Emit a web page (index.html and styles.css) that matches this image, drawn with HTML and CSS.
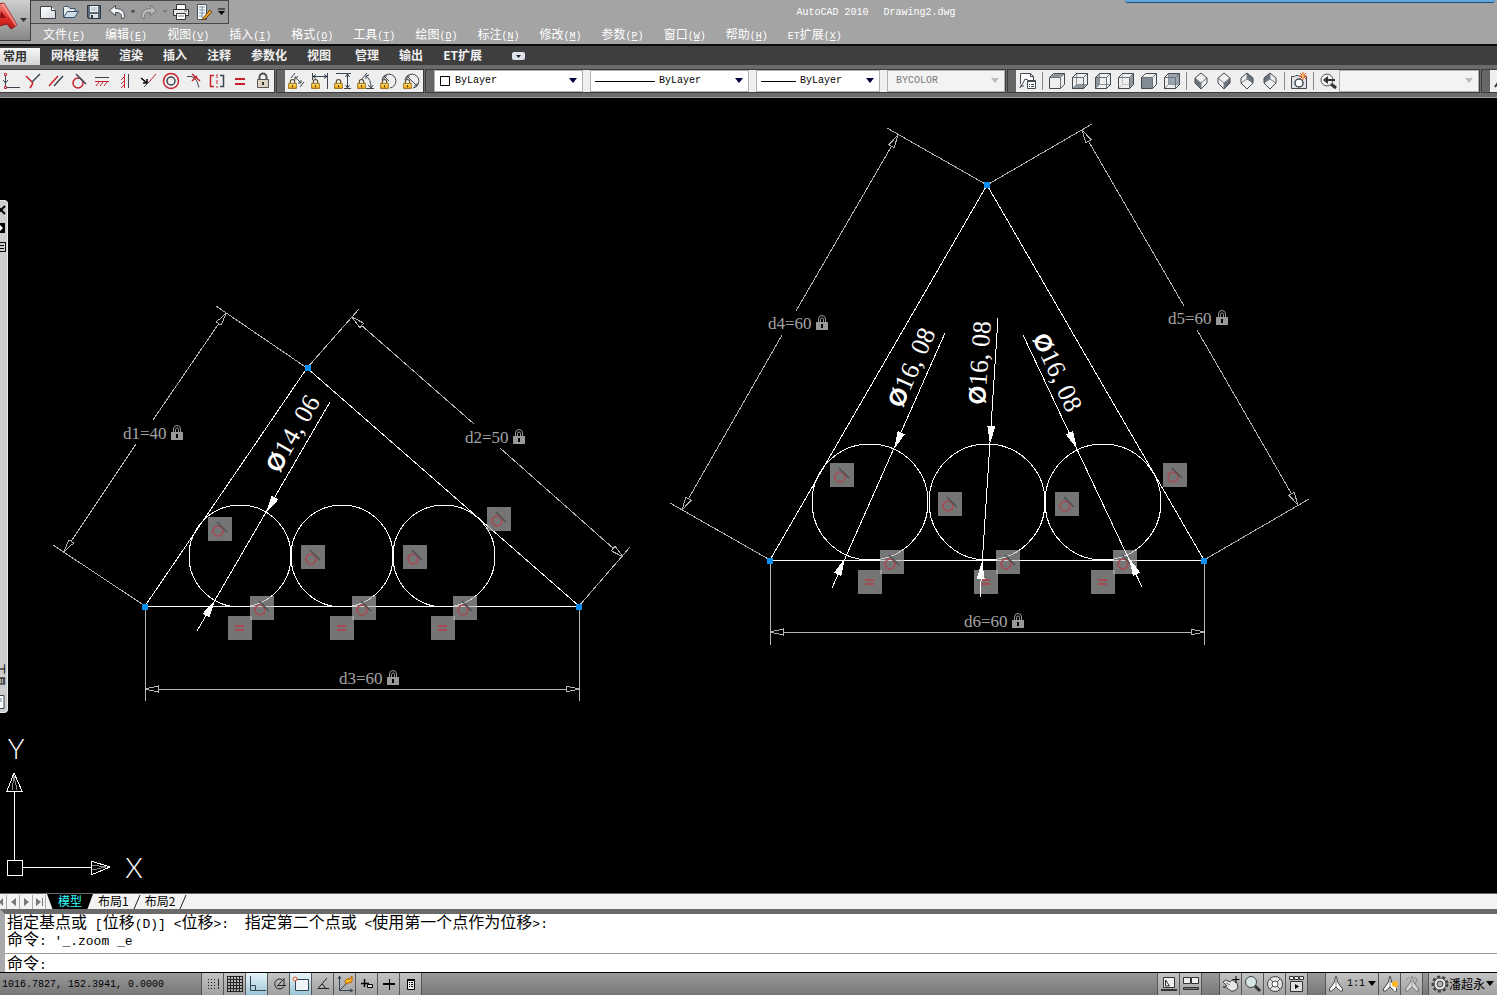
FILE: index.html
```html
<!DOCTYPE html>
<html lang="zh-CN">
<head>
	<meta charset="utf-8">
	<meta name="viewport" content="width=device-width, initial-scale=1">
	<title>AutoCAD 2010 Drawing2.dwg</title>
	<link rel="stylesheet" href="styles.css">
</head>

<body>
	<!-- shared shapes -->
	<svg class="defs" aria-hidden="true">
		<defs>
			<linearGradient id="paper" x1="0" y1="0" x2="1" y2="1"><stop offset="0" stop-color="#fff"/><stop offset="1" stop-color="#d5dade"/></linearGradient>
			<linearGradient id="red" x1="0" y1="0" x2="0" y2="1"><stop offset="0" stop-color="#f58a80"/><stop offset=".5" stop-color="#dd2b26"/><stop offset="1" stop-color="#a51313"/></linearGradient>
			<linearGradient id="gold" x1="0" y1="0" x2="0" y2="1"><stop offset="0" stop-color="#ffe27a"/><stop offset="1" stop-color="#f0a500"/></linearGradient>

			<symbol id="goldlock" viewBox="0 0 8 9"><path d="M2 4V2.500a2 2 0 0 1 4 0V4" fill="none" stroke="#5a4620"/><path d="M.5 4h7v4.500h-7z" fill="url(#gold)" stroke="#8a5a00" stroke-width=".7"/><path d="M4 5.500v2" stroke="#5a3a00"/></symbol>
			<symbol id="dimlock" viewBox="0 0 12 15"><path d="M2.500 7V4a3.500 3.500 0 0 1 7 0v3M4.500 7V4.500a1.500 1.500 0 0 1 3 0V7" fill="none" stroke="#999"/><path d="M0 7h12v8H0z" fill="#999"/><path d="M6 9v4" stroke="#000" stroke-width="2"/></symbol>
			<symbol id="tan" viewBox="0 0 24 24"><path d="M0 0h24v24H0z" fill="#b4b4b4" opacity=".65"/><circle cx="10" cy="14" r="5" fill="none" stroke="#a84850" stroke-width="1.500" shape-rendering="geometricPrecision"/><path d="M9 5l10 10" stroke="#4c5052" stroke-width="1.500" shape-rendering="geometricPrecision"/></symbol>
			<symbol id="eq" viewBox="0 0 24 24"><path d="M0 0h24v24H0z" fill="#b4b4b4" opacity=".65"/><path d="M7 10h9M7 14h9" stroke="#a84850" stroke-width="2"/></symbol>
			<symbol id="cube" viewBox="0 0 18 18"><path d="M1.500 5.500h11v11M12.500 5.500l4-4" fill="none" stroke="#6a727a"/><path d="M1.500 5.500l4-4h11v11l-4 4h-11z" fill="none" stroke="#434a52"/></symbol>
			<symbol id="cubeback" viewBox="0 0 18 18"><path d="M5.500 1.500v11M5.500 12.500h11M5.500 12.500l-4 4" fill="none" stroke="#8a929a"/><path d="M1.500 5.500l4-4h11v11l-4 4h-11z" fill="none" stroke="#434a52"/></symbol>
			<symbol id="diamond" viewBox="0 0 18 18"><path d="M3 6l6-5 6 5v5l-6 6-6-6z" fill="none" stroke="#434a52"/></symbol>
			<symbol id="down" viewBox="0 0 10 6"><path d="M1 0h8L5 5z" fill="currentColor"/></symbol>
			<symbol id="scale" viewBox="0 0 18 18"><path d="M7.500 7l1-5.500h1l1 5.500 5 7v2h-2l-4.500-4L4.500 16h-2v-2z" fill="#fff" stroke="#444"/><path d="M9 3v9" stroke="#888"/></symbol>

			<!-- arrow heads, tip at 0,0 -->
			<path id="open" d="M0 0L13-3V3Z" fill="#000" stroke="#b4b4b4"/>
			<path id="solid" d="M0 0L18-4V4Z" fill="#fff"/>
		</defs>
	</svg>

	<header class="titlebar">
		<button class="appmenu" type="button" aria-label="应用程序菜单">
			<svg width="30" height="40" viewBox="0 0 30 40"><path d="M-8 33L-2 4l6-1 13 22-6 4-4-5-8 2-2 8z" fill="url(#red)" stroke="#8b1414"/><path d="M0 18l1-7 5 7z" fill="#8e1010"/><path d="M4 3l13 22-2 1L1 4z" fill="#f8a098" opacity=".7"/><path d="M20 18h7l-3.500 4z" fill="#333"/></svg>
		</button>
		<div class="titlemain">
			<div class="titlerow">
				<div class="quick">
					<button type="button" aria-label="新建"><svg width="18" height="18"><path d="M1.500 3.500h11l4 4v8h-15z" fill="url(#paper)" stroke="#3a3f45"/><path d="M12.500 3.500v4h4" fill="#fff" stroke="#3a3f45"/></svg></button>
					<button type="button" aria-label="打开"><svg width="18" height="18"><path d="M1.500 14.500v-10l1-1h4l1.500 2h5v3" fill="#e6ebef" stroke="#35506a"/><path d="M1.500 14.500l4-6h11l-4 6z" fill="#cfdce6" stroke="#35506a"/></svg></button>
					<button type="button" aria-label="保存"><svg width="18" height="18"><path d="M2.500 2.500h13v13h-12l-1-1z" fill="#5b6a7a" stroke="#2d3844"/><path d="M5 3h8v6H5z" fill="#f4f6f8"/><path d="M6 5h6M6 7h6" stroke="#9aa"/><path d="M5 11h8v4H5z" fill="#dde2e6"/><path d="M6 12h2v3H6z" fill="#333"/></svg></button>
					<button type="button" aria-label="放弃"><svg width="18" height="18"><path d="M1.500 7.500l6-5v3c5 0 9 2 9 8l-1 2h-2c1-5-2-6-6-6v3z" fill="#f4f6f8" stroke="#444c55"/></svg></button>
					<button class="tiny" type="button" aria-label="放弃列表"><svg width="6" height="4"><use href="#down"/></svg></button>
					<button type="button" aria-label="重做"><svg width="18" height="18"><path d="M16.500 7.500l-6-5v3c-5 0-9 2-9 8l1 2h2c-1-5 2-6 6-6v3z" fill="#b8b8b8" stroke="#777"/></svg></button>
					<button class="tiny pale" type="button" aria-label="重做列表"><svg width="6" height="4"><use href="#down"/></svg></button>
					<button type="button" aria-label="打印"><svg width="18" height="18"><path d="M4.500 1.500h9v5h-9z" fill="#fff" stroke="#333"/><path d="M1.500 6.500h15v6h-15z" fill="#e8eaec" stroke="#333"/><path d="M4.500 10.500h9v6h-9z" fill="#fff" stroke="#333"/><path d="M6 13h6M12 8h3" stroke="#777"/></svg></button>
					<button type="button" aria-label="特性"><svg width="18" height="18"><path d="M2.500 1.500h9v15h-9z" fill="#fff" stroke="#47525c"/><path d="M4 4h6M4 7h6M4 10h6M4 13h4M7 3v12" stroke="#7890a5"/><path d="M8 15l7-8 2 2-7 7-3 1z" fill="#f0a020" stroke="#70440a"/></svg></button>
					<button class="more" type="button" aria-label="自定义"><svg width="9" height="8"><path d="M1 1h7" stroke="#000"/><path d="M1 3h7L4.500 7z"/></svg></button>
				</div>
				<h1 class="caption"><span>AutoCAD 2010</span><span>Drawing2.dwg</span></h1>
				<div class="bluetip"></div>
			</div>
			<nav class="menubar">
				<button type="button">文件<span>(<u>F</u>)</span></button>
				<button type="button">编辑<span>(<u>E</u>)</span></button>
				<button type="button">视图<span>(<u>V</u>)</span></button>
				<button type="button">插入<span>(<u>I</u>)</span></button>
				<button type="button">格式<span>(<u>O</u>)</span></button>
				<button type="button">工具<span>(<u>T</u>)</span></button>
				<button type="button">绘图<span>(<u>D</u>)</span></button>
				<button type="button">标注<span>(<u>N</u>)</span></button>
				<button type="button">修改<span>(<u>M</u>)</span></button>
				<button type="button">参数<span>(<u>P</u>)</span></button>
				<button type="button">窗口<span>(<u>W</u>)</span></button>
				<button type="button">帮助<span>(<u>H</u>)</span></button>
				<button type="button"><span>ET</span>扩展<span>(<u>X</u>)</span></button>
			</nav>
		</div>
	</header>

	<nav class="ribbon">
		<button class="on" type="button">常用</button>
		<button type="button">网格建模</button>
		<button type="button">渲染</button>
		<button type="button">插入</button>
		<button type="button">注释</button>
		<button type="button">参数化</button>
		<button class="wide" type="button">视图</button>
		<button type="button">管理</button>
		<button type="button">输出</button>
		<button type="button">ET扩展</button>
		<button class="fold" type="button" aria-label="最小化"><svg width="13" height="8"><rect width="13" height="8" rx="2" fill="#dfe3ea"/><path d="M4 3h5L6.500 6z" fill="#222"/></svg></button>
	</nav>

	<div class="toolbars">
		<!-- geometric constraints -->
		<div class="bar first">
			<button type="button" aria-label="重合"><svg width="18" height="18"><path d="M3.500 4v10M5 15.500h13" stroke="#3c4650"/><path d="M1 8l2.500 3L6 8" fill="none" stroke="#3c4650"/><path d="M2.500 1.500h2v2h-2zM2.500 14.500h2v2h-2z" fill="#fff" stroke="#c8202c"/></svg></button>
			<button type="button" aria-label="垂直"><svg width="18" height="18"><path d="M2 4l7 7M6 16l3-5" stroke="#c8202c" stroke-width="1.500"/><path d="M8 10l8-8" stroke="#3c4650" stroke-width="1.500"/></svg></button>
			<button type="button" aria-label="平行"><svg width="18" height="18"><path d="M2 14L11 4" stroke="#c8202c" stroke-width="1.500"/><path d="M7 14l9-10" stroke="#3c4650" stroke-width="1.500"/></svg></button>
			<button type="button" aria-label="相切"><svg width="18" height="18"><circle cx="8" cy="11" r="5" fill="none" stroke="#c8202c" stroke-width="1.500"/><path d="M6 2l10 10" stroke="#3c4650" stroke-width="1.500"/></svg></button>
			<button type="button" aria-label="水平"><svg width="18" height="18"><path d="M2 5.500h14" stroke="#3c4650"/><path d="M2 9.500h14M6 10l-3 4M10 10l-3 4M14 10l-3 4" stroke="#c8202c"/></svg></button>
			<button type="button" aria-label="竖直"><svg width="18" height="18"><path d="M12.500 2v14" stroke="#3c4650"/><path d="M8.500 2v14M8 5L5 8M8 9l-3 3M8 13l-3 3" stroke="#c8202c"/></svg></button>
			<button type="button" aria-label="共线"><svg width="18" height="18"><path d="M2 6l6 5M8 7v4H4" fill="none" stroke="#000" stroke-width="1.500"/><path d="M5 15l5-5" stroke="#3c4650"/><path d="M10 10l7-8" stroke="#c8202c"/></svg></button>
			<button type="button" aria-label="同心"><svg width="18" height="18"><circle cx="9" cy="9" r="7.500" fill="none" stroke="#c8202c" stroke-width="1.500"/><circle cx="9" cy="9" r="4" fill="none" stroke="#3c4650" stroke-width="1.500"/></svg></button>
			<button type="button" aria-label="平滑"><svg width="18" height="18"><path d="M2 4.500h4q4 0 6 5l2 6" fill="none" stroke="#3c4650"/><path d="M7 2l8 7M7 9l5-5" stroke="#c8202c" stroke-width="1.500"/></svg></button>
			<button type="button" aria-label="对称"><svg width="18" height="18"><path d="M6 3.500H2.500v11H6" fill="none" stroke="#c8202c" stroke-width="1.500"/><path d="M9 2v14" stroke="#c8202c" stroke-dasharray="4 2"/><path d="M12 3.500h3.500v11H12" fill="none" stroke="#3c4650" stroke-width="1.500"/></svg></button>
			<button type="button" aria-label="相等"><svg width="18" height="18"><path d="M4 7h10M4 12h10" stroke="#c8202c" stroke-width="2"/></svg></button>
			<button type="button" aria-label="固定"><svg width="18" height="18"><path d="M5.500 8V5a3.500 3.500 0 0 1 7 0v3" fill="none" stroke="#555" stroke-width="2"/><path d="M3.500 7.500h11v8h-11z" fill="#ddd3bf" stroke="#555"/><path d="M9 10v3" stroke="#333" stroke-width="2"/></svg></button>
		</div>

		<!-- dimensional constraints -->
		<div class="bar grip">
			<button type="button" aria-label="对齐"><svg width="18" height="18"><path d="M3 6l4-5M7 5l6 6M12 15l4-5M7 8V5h3M13 8v3h-3" fill="none" stroke="#3c4650"/><use href="#goldlock" x="0" y="7" width="9" height="10"/></svg></button>
			<button type="button" aria-label="水平"><svg width="18" height="18"><path d="M1.500 1v7M16.500 1v16M2 4.500h14M5 2.500l-3 2 3 2M13 2.500l3 2-3 2" fill="none" stroke="#3c4650"/><use href="#goldlock" x="0" y="7" width="9" height="10"/></svg></button>
			<button type="button" aria-label="竖直"><svg width="18" height="18"><path d="M2 1.500h15M10 16.500h7M13.500 2v14M11.500 5l2-3 2 3M11.500 13l2 3 2-3" fill="none" stroke="#3c4650"/><use href="#goldlock" x="0" y="7" width="9" height="10"/></svg></button>
			<button type="button" aria-label="角度"><svg width="18" height="18"><path d="M4 8l6-7M9 4q5 3 5 12M9 7V4l3-1M11 13l3 3 2-3M9 16.500h8" fill="none" stroke="#3c4650"/><use href="#goldlock" x="0" y="7" width="9" height="10"/></svg></button>
			<button type="button" aria-label="半径"><svg width="18" height="18"><path d="M2 8a7 7 0 1 1 8 8M9 9L4 4M4 7V4h3" fill="none" stroke="#3c4650"/><use href="#goldlock" x="0" y="7" width="9" height="10"/></svg></button>
			<button type="button" aria-label="直径"><svg width="18" height="18"><path d="M2 8a7 7 0 1 1 8 8M14 14L4 4M4 7V4h3M14 11v3h-3" fill="none" stroke="#3c4650"/><use href="#goldlock" x="0" y="7" width="9" height="10"/></svg></button>
		</div>

		<!-- properties -->
		<div class="bar grip props">
			<div class="combo color">
				<svg width="12" height="12"><path d="M1.500 1.500h9v9h-9z" fill="#fff" stroke="#000"/></svg>
				<select aria-label="颜色"><option>ByLayer</option></select>
				<svg class="arrow" width="10" height="6"><use href="#down"/></svg>
			</div>
			<div class="combo ltype">
				<svg width="60" height="3"><path d="M0 1.500h60" stroke="#000"/></svg>
				<select aria-label="线型"><option>ByLayer</option></select>
				<svg class="arrow" width="10" height="6"><use href="#down"/></svg>
			</div>
			<div class="combo lweight">
				<svg width="35" height="3"><path d="M0 1.500h35" stroke="#000"/></svg>
				<select aria-label="线宽"><option>ByLayer</option></select>
				<svg class="arrow" width="10" height="6"><use href="#down"/></svg>
			</div>
			<div class="combo plot off">
				<select aria-label="打印样式" disabled><option>BYCOLOR</option></select>
				<svg class="arrow" width="10" height="6"><use href="#down"/></svg>
			</div>
		</div>

		<!-- views -->
		<div class="bar grip">
			<button type="button" aria-label="命名视图"><svg width="18" height="18"><path d="M1.500 12V1.500h10l3 3V8" fill="#fff" stroke="#434a52"/><path d="M11.500 1.500v3h3M1 16l3-5 2-4 3 1M1 14h4" fill="none" stroke="#434a52"/><path d="M8.500 8.500h8v8h-8z" fill="#fff" stroke="#434a52"/><path d="M9 9.500h7M10 12.500h1M12 12.500h3M10 14.500h1M12 14.500h3" stroke="#434a52"/></svg></button>
			<i class="sep"></i>
			<button type="button" aria-label="俯视"><svg width="18" height="18"><path d="M2 5l4-3h10l-4 3z" fill="#8d959d"/><use href="#cube"/></svg></button>
			<button type="button" aria-label="仰视"><svg width="18" height="18"><path d="M2 16l4-4h10l-4 4z" fill="#8d959d"/><use href="#cubeback"/><use href="#cube"/></svg></button>
			<button type="button" aria-label="左视"><svg width="18" height="18"><path d="M2 6l4-4v10l-4 4z" fill="#8d959d"/><use href="#cubeback"/><use href="#cube"/></svg></button>
			<button type="button" aria-label="右视"><svg width="18" height="18"><path d="M13 6l3-4v10l-3 4z" fill="#8d959d"/><use href="#cubeback" opacity=".5"/><use href="#cube"/></svg></button>
			<button type="button" aria-label="前视"><svg width="18" height="18"><path d="M2 6h10v10H2z" fill="#818b95"/><use href="#cube"/></svg></button>
			<button type="button" aria-label="后视"><svg width="18" height="18"><path d="M6 2h10v10H6z" fill="#99a4b0"/><use href="#cubeback"/><use href="#cube"/></svg></button>
			<i class="sep"></i>
			<button type="button" aria-label="西南等轴测"><svg width="18" height="18"><path d="M3 6l6 5v6l-6-6z" fill="#69737d"/><path d="M3 6l6 5 6-5M9 11v6" fill="none" stroke="#7a828a"/><use href="#diamond"/></svg></button>
			<button type="button" aria-label="东南等轴测"><svg width="18" height="18"><path d="M15 6l-6 5v6l6-6z" fill="#69737d"/><path d="M3 6l6 5 6-5M9 11v6" fill="none" stroke="#7a828a"/><use href="#diamond"/></svg></button>
			<button type="button" aria-label="东北等轴测"><svg width="18" height="18"><path d="M9 1l6 5v5L9 7z" fill="#69737d"/><path d="M3 11l6-4 6 4M9 1v6" fill="none" stroke="#7a828a"/><use href="#diamond"/></svg></button>
			<button type="button" aria-label="西北等轴测"><svg width="18" height="18"><path d="M9 1L3 6v5l6-4z" fill="#69737d"/><path d="M3 11l6-4 6 4M9 1v6" fill="none" stroke="#7a828a"/><use href="#diamond"/></svg></button>
			<i class="sep"></i>
			<button type="button" aria-label="创建相机"><svg width="18" height="18"><path d="M1.500 4.500h3l1-1h3l1 1h7v12h-15z" fill="#dfe3e6" stroke="#434a52"/><circle cx="9" cy="11" r="4" fill="#fff" stroke="#434a52" stroke-width="1.500"/><path d="M13 0v8M9 4h8M10 1l6 6M16 1l-6 6" stroke="#e05c10"/><circle cx="13" cy="4" r="1" fill="#ffe060"/></svg></button>
			<i class="sep"></i>
			<button type="button" aria-label="上一个视图"><svg width="18" height="18"><path d="M12 12l5 4" stroke="#333" stroke-width="3"/><circle cx="8" cy="8" r="6" fill="#e8edf0" stroke="#555"/><path d="M4 8l5-4v3h7v2H9v3z" fill="#333"/></svg></button>
			<div class="combo views off">
				<select aria-label="视图列表" disabled><option></option></select>
				<svg class="arrow" width="10" height="6"><use href="#down"/></svg>
			</div>
		</div>

		<div class="bar grip last">
			<button type="button" aria-label="直线"><svg width="18" height="18"><path d="M2 15L10 3" stroke="#333" stroke-width="2"/></svg></button>
		</div>
	</div>

	<main class="canvas">
		<svg class="drawing" width="100%" height="100%">
			<g transform="translate(0,-98)" shape-rendering="crispEdges">
				<!-- left triangle: outline and dimensions -->
				<g fill="none" stroke="#b4b4b4">
					<path d="M307 368L216 306M145 606L53 545M307 368L359 309M579 606L630 547M145 606V701M579 606V701"/>
					<path d="M226 313L153 420M136 444L64 552M352 317L474 424M500 448L623 557M145 689H579"/>
				</g>
				<use href="#open" transform="translate(226,313) rotate(124)"/>
				<use href="#open" transform="translate(64,552) rotate(-56)"/>
				<use href="#open" transform="translate(352,317) rotate(41)"/>
				<use href="#open" transform="translate(623,557) rotate(-139)"/>
				<use href="#open" transform="translate(145,689)"/>
				<use href="#open" transform="translate(579,689) rotate(180)"/>
				<g fill="none" stroke="#fff">
					<path d="M145 606L307 368L579 606Z"/>
					<circle cx="240" cy="556" r="51"/><circle cx="342" cy="556" r="51"/><circle cx="444" cy="556" r="51"/>
					<path d="M330 402L197 631"/>
				</g>
				<use href="#solid" transform="translate(266,513) rotate(-60)"/>
				<use href="#solid" transform="translate(215,600) rotate(120)"/>
				<use href="#tan" x="208" y="517" width="24" height="24"/>
				<use href="#tan" x="301" y="545" width="24" height="24"/>
				<use href="#tan" x="403" y="545" width="24" height="24"/>
				<use href="#tan" x="487" y="507" width="24" height="24"/>
				<use href="#tan" x="250" y="596" width="24" height="24"/>
				<use href="#tan" x="352" y="596" width="24" height="24"/>
				<use href="#tan" x="453" y="596" width="24" height="24"/>
				<use href="#eq" x="228" y="616" width="24" height="24"/>
				<use href="#eq" x="330" y="616" width="24" height="24"/>
				<use href="#eq" x="431" y="616" width="24" height="24"/>

				<!-- right triangle -->
				<g fill="none" stroke="#b4b4b4">
					<path d="M987 185L887 128M770 560L670 503M987 185L1092 124M1204 560L1309 499M770 560V645M1204 560V645"/>
					<path d="M898 135L796 311M782 335L682 510M1082 130L1184 306M1197 330L1298 505M770 632H1204"/>
				</g>
				<use href="#open" transform="translate(898,135) rotate(120)"/>
				<use href="#open" transform="translate(682,510) rotate(-60)"/>
				<use href="#open" transform="translate(1082,130) rotate(60)"/>
				<use href="#open" transform="translate(1298,505) rotate(-120)"/>
				<use href="#open" transform="translate(770,632)"/>
				<use href="#open" transform="translate(1204,632) rotate(180)"/>
				<g fill="none" stroke="#fff">
					<path d="M770 560L987 185L1204 560Z"/>
					<circle cx="870" cy="502" r="58"/><circle cx="987" cy="502" r="58"/><circle cx="1103" cy="502" r="58"/>
				</g>
				<use href="#tan" x="830" y="463" width="24" height="24"/>
				<use href="#tan" x="938" y="492" width="24" height="24"/>
				<use href="#tan" x="1055" y="492" width="24" height="24"/>
				<use href="#tan" x="1163" y="463" width="24" height="24"/>
				<use href="#tan" x="880" y="550" width="24" height="24"/>
				<use href="#tan" x="996" y="550" width="24" height="24"/>
				<use href="#tan" x="1113" y="550" width="24" height="24"/>
				<use href="#eq" x="858" y="570" width="24" height="24"/>
				<use href="#eq" x="974" y="570" width="24" height="24"/>
				<use href="#eq" x="1091" y="570" width="24" height="24"/>
				<path d="M945 333L832 588M998 318L980 597M1023 335L1142 587" fill="none" stroke="#fff"/>
				<use href="#solid" transform="translate(894,449) rotate(-66)"/>
				<use href="#solid" transform="translate(845,558) rotate(114)"/>
				<use href="#solid" transform="translate(990,444) rotate(-86)"/>
				<use href="#solid" transform="translate(982,561) rotate(94)"/>
				<use href="#solid" transform="translate(1077,449) rotate(-115)"/>
				<use href="#solid" transform="translate(1129,558) rotate(65)"/>

				<!-- grips -->
				<path d="M305 365h6v6h-6zM142 604h6v6h-6zM576 604h6v6h-6zM984 182h6v6h-6zM767 558h6v6h-6zM1201 558h6v6h-6z" fill="#0a90f0"/>

				<!-- ucs icon -->
				<path d="M7 860H22V875H7ZM14 860V791M22 867H91M14 773L7 791H22ZM110 867L91 861V875Z" fill="none" stroke="#fff"/>
				<path d="M12 790L14 776L17 790M92 865L106 867L92 870" fill="none" stroke="#888"/>
			</g>
			<g transform="translate(0,-98)">
				<g class="param">
					<text x="123" y="439">d1=40</text><use href="#dimlock" x="171" y="425" width="12" height="15"/>
					<text x="465" y="443">d2=50</text><use href="#dimlock" x="513" y="429" width="12" height="15"/>
					<text x="339" y="684">d3=60</text><use href="#dimlock" x="387" y="670" width="12" height="15"/>
					<text x="768" y="329">d4=60</text><use href="#dimlock" x="816" y="315" width="12" height="15"/>
					<text x="1168" y="324">d5=60</text><use href="#dimlock" x="1216" y="310" width="12" height="15"/>
					<text x="964" y="627">d6=60</text><use href="#dimlock" x="1012" y="613" width="12" height="15"/>
				</g>
				<g class="dia">
					<text transform="translate(279,474) rotate(-60)"><tspan class="phi">Ø</tspan>14, 06</text>
					<text transform="translate(902,409) rotate(-66)"><tspan class="phi">Ø</tspan>16, 08</text>
					<text transform="translate(985,405) rotate(-86)"><tspan class="phi">Ø</tspan>16, 08</text>
					<text transform="translate(1032,338) rotate(65)"><tspan class="phi">Ø</tspan>16, 08</text>
				</g>
				<g class="axis">
					<text x="16" y="759">Y</text>
					<text x="134" y="878">X</text>
				</g>
			</g>
		</svg>

		<aside class="palette">
			<button type="button" aria-label="关闭"><svg width="6" height="10"><path d="M-3 1l8 8M5 1l-8 8" stroke="#000" stroke-width="2"/></svg></button>
			<button type="button" aria-label="自动隐藏"><svg width="6" height="10"><path d="M0 0h5v10H0z"/><path d="M0 2l3 3-3 3z" fill="#fff"/></svg></button>
			<button type="button" aria-label="特性"><svg width="6" height="11"><path d="M0 1.500h5.500v9H0M0 4.500h4M0 7.500h4" fill="none" stroke="#000"/></svg></button>
			<span class="name">工具</span>
			<svg width="6" height="14"><path d="M-1 .5h5v13h-5" fill="#fff" stroke="#345"/><path d="M0 3h2v4H0z" fill="#abc"/></svg>
		</aside>
	</main>

	<div class="layouts">
		<button class="nav" type="button" aria-label="第一个"><svg width="6" height="12"><path d="M3 2v8L-1 6z" fill="#777"/></svg></button>
		<button class="nav" type="button" aria-label="上一个"><svg width="11" height="12"><path d="M8 2v8L3 6z" fill="#777"/></svg></button>
		<button class="nav" type="button" aria-label="下一个"><svg width="11" height="12"><path d="M3 2v8l5-4z" fill="#777"/></svg></button>
		<button class="nav" type="button" aria-label="最后一个"><svg width="11" height="12"><path d="M2 2v8l5-4z" fill="#777"/><path d="M8.500 2v8" stroke="#777"/></svg></button>
		<button class="tab on" type="button">模型</button>
		<button class="tab" type="button">布局1</button>
		<svg width="8" height="14"><path d="M1 14L7 0" stroke="#222"/></svg>
		<button class="tab" type="button">布局2</button>
		<svg width="8" height="14"><path d="M1 14L7 0" stroke="#222"/></svg>
	</div>

	<section class="command">
		<div class="history">
			<p>指定基点或<span> [</span>位移<span>(D)] &lt;</span>位移<span>&gt;:  </span>指定第二个点或<span> &lt;</span>使用第一个点作为位移<span>&gt;:</span></p>
			<p>命令<span>: '_.zoom _e</span></p>
		</div>
		<div class="prompt">
			<label for="cmd">命令<span>:</span></label>
			<input id="cmd" type="text">
		</div>
	</section>

	<footer class="status">
		<output class="coords">1016.7827, 152.3941, 0.0000</output>
		<div class="group">
			<button type="button" aria-label="捕捉"><svg width="18" height="18"><path d="M4 4.500h9M4 7.500h9M4 10.500h9M4 13.500h9" stroke="#222" stroke-dasharray="1 2"/><path d="M14.500 4v10" stroke="#222" stroke-dasharray="7 1"/></svg></button>
			<button type="button" aria-label="栅格"><svg width="18" height="18"><path d="M1 1.500h16M1 4.500h16M1 7.500h16M1 10.500h16M1 13.500h16M1 16.500h16M1.500 1v16M4.500 1v16M7.500 1v16M10.500 1v16M13.500 1v16M16.500 1v16" stroke="#222"/></svg></button>
			<button class="lit" type="button" aria-label="正交"><svg width="18" height="18"><path d="M2.500 1v14.500H18M2.500 10.500h5v5" fill="none" stroke="#345"/></svg></button>
			<button type="button" aria-label="极轴"><svg width="18" height="18"><path d="M12 4.500a5 5 0 1 0 2 7M8 10.500l6-7v7" fill="none" stroke="#222"/><path d="M7 10.500h9" stroke="#222"/></svg></button>
			<button class="lit" type="button" aria-label="对象捕捉"><svg width="18" height="18"><path d="M3.500 4.500h13v11h-13z" fill="#eef4f7" stroke="#345"/><circle cx="3" cy="4" r="2" fill="#fff" stroke="#e05020"/></svg></button>
			<button type="button" aria-label="对象追踪"><svg width="18" height="18"><path d="M13 3L4 13.500h11M8 9q3 2 3 4" fill="none" stroke="#222"/></svg></button>
			<button type="button" aria-label="动态 UCS"><svg width="18" height="18"><path d="M3.500 2v13.500H16M4 15l8-8M2 4l1.500-3L5 4M14 14l3 1.500-3 1.500" fill="none" stroke="#345"/><path d="M9 6l3-3 1 2 3-4v6l-4 1-2 1z" fill="#ffb820" stroke="#b86000"/></svg></button>
			<button type="button" aria-label="动态输入"><svg width="18" height="18"><path d="M3 8.500h8M6.500 4v8" stroke="#000" stroke-width="1.500"/><path d="M9.500 9.500h5v3h-5z" fill="#ddd" stroke="#000"/></svg></button>
			<button type="button" aria-label="线宽"><svg width="18" height="18"><path d="M3 9h12" stroke="#000" stroke-width="2"/><path d="M9.500 4v11" stroke="#000"/></svg></button>
			<button type="button" aria-label="快捷特性"><svg width="18" height="18"><path d="M5.500 4.500h7v10h-7z" fill="#eee" stroke="#000"/><path d="M7 7.500h1M9 7.500h2M7 9.500h1M9 9.500h2M7 11.500h1M9 11.500h2" stroke="#000"/><path d="M5 5h8" stroke="#000" stroke-width="2"/></svg></button>
		</div>
		<div class="group right">
			<button type="button" aria-label="模型"><svg width="18" height="18"><path d="M3.500 2.500h11v10h-11z" fill="#eee" stroke="#333"/><path d="M5.500 5v6h4z" fill="none" stroke="#333"/><path d="M1 15h16" stroke="#333" stroke-width="2"/></svg></button>
			<button type="button" aria-label="快速查看图形"><svg width="18" height="18"><path d="M1.500 2.500h7v6h-7zM9.500 2.500h7v6h-7z" fill="#eee" stroke="#333"/><path d="M1.500 12.500h15v2h-15z" fill="#777" stroke="#333"/></svg></button>
		</div>
		<div class="group gap">
			<button type="button" aria-label="平移"><svg width="18" height="18"><path d="M1 7l3-2 4 2 2-2 5 3 1 5-4 3H9l-4-3-4-1 4-1z" fill="#e8e8e8" stroke="#444"/><path d="M14 1v7M10.500 4.500h7" stroke="#000"/><path d="M4 8l4 2" stroke="#777"/></svg></button>
			<button type="button" aria-label="缩放"><svg width="18" height="18"><path d="M10 10l6 6" stroke="#333" stroke-width="3"/><circle cx="7" cy="7" r="5.500" fill="#d6e4e4" stroke="#444"/></svg></button>
			<button type="button" aria-label="控制盘"><svg width="18" height="18"><circle cx="9" cy="9" r="7.500" fill="#e4e4e4" stroke="#444"/><circle cx="9" cy="9" r="3" fill="#fff" stroke="#555"/><path d="M4 4l3 3M14 4l-3 3M4 14l3-3M14 14l-3-3" stroke="#555"/></svg></button>
			<button type="button" aria-label="动画"><svg width="18" height="18"><path d="M1.500 1.500h4v3h-4zM6.500 1.500h4v3h-4zM11.500 1.500h4v3h-4z" fill="#eee" stroke="#333"/><path d="M2.500 6.500h12v10h-12z" fill="#ddd" stroke="#333"/><path d="M7 9v5l4-2.500z"/></svg></button>
		</div>
		<div class="group gap">
			<button class="anno" type="button"><svg width="18" height="18"><use href="#scale"/></svg><span>1:1</span><svg width="10" height="6"><use href="#down"/></svg></button>
			<button type="button" aria-label="注释可见性"><svg width="18" height="18"><use href="#scale"/><circle cx="14" cy="9" r="3" fill="#ffb820"/><path d="M14 12v4" stroke="#fff" stroke-width="2"/></svg></button>
			<button class="dim" type="button" aria-label="自动缩放"><svg width="18" height="18"><use href="#scale"/><path d="M3 5l3-3M12 2l2 3-2 4" fill="none" stroke="#444"/></svg></button>
		</div>
		<div class="group user">
			<button type="button"><svg width="18" height="18"><circle cx="9" cy="9" r="7" fill="none" stroke="#444" stroke-width="3" stroke-dasharray="3 2"/><circle cx="9" cy="9" r="6" fill="#e6e6e6" stroke="#444"/><circle cx="9" cy="9" r="3" fill="#b0b0b0" stroke="#444"/></svg><span class="cn">潘超永</span><svg width="10" height="6"><use href="#down"/></svg></button>
		</div>
	</footer>
</body>
</html>
```
FILE: styles.css
```css
* {
	box-sizing:border-box;
}

body {
	margin:0;
	height:100vh;
	display:flex;
	flex-direction:column;
	overflow:hidden;
	background:#000;
	font-family:"Noto Sans CJK SC", sans-serif;
	font-size:12px;
	line-height:16px;
}

button {
	margin:0;
	padding:0;
	border:0;
	background:none;
	color:inherit;
	font:inherit;
	display:flex;
	align-items:center;
	justify-content:center;
	white-space:nowrap;
}

svg {
	display:block;
	flex:none;
}

.defs {
	position:absolute;
	width:0;
	height:0;
}

/* title bar and menu */
.titlebar {
	display:flex;
	flex:none;
	height:46px;
	background:#a4a4a4;
	border-bottom:2px solid #0a0a0a;
	color:#fff;
}

.appmenu {
	width:31px;
	height:41px;
	background:linear-gradient(#d0d0d0, #868686);
	border:1px solid #3c3c3c;
	border-width:0 1px 1px 0;
	overflow:hidden;
}

.titlemain {
	flex:1;
	min-width:0;
}

.titlerow {
	display:flex;
	height:24px;
}

.quick {
	display:flex;
	width:198px;
	padding-left:5px;
	background:#9c9c9c;
	border:1px solid #484848;
	border-width:1px 1px 1px 0;
	color:#444;
}

.quick button {
	width:23px;
}

.quick .tiny {
	width:9px;
}

.quick .pale {
	color:#777;
}

.quick .more {
	width:12px;
}

.caption {
	flex:1;
	display:flex;
	justify-content:center;
	gap:15px;
	margin:0;
	padding:5px 0 0 26px;
	font:10px/16px "Liberation Mono", monospace;
}

.bluetip {
	position:absolute;
	top:0;
	right:2px;
	width:370px;
	height:3px;
	background:#62a8dc;
	border-bottom:1px solid #1d4a78;
	border-radius:0 0 4px 4px;
}

.menubar {
	display:flex;
	gap:20px;
	padding:2px 0 0 12px;
}

.menubar button {
	align-items:baseline;
}

.menubar span {
	font:10px/12px "Liberation Mono", monospace;
}

/* ribbon tabs */
.ribbon {
	display:flex;
	flex:none;
	gap:20px;
	height:19px;
	background:#3e3e3e;
	color:#f0f0f0;
	font-weight:bold;
}

.ribbon button {
	height:17px;
}

.ribbon .on {
	width:40px;
	margin:2px -9px 0 0;
	padding:0 10px 2px 0;
	background:linear-gradient(#f8f8f8, #d4d4d4);
	color:#333;
}

.ribbon .wide {
	margin-right:4px;
}

.ribbon .fold {
	height:20px;
	margin-left:10px;
}

/* tool bars */
.toolbars {
	display:flex;
	flex:none;
	gap:1px;
	padding:4px 0;
	background:#6b6b6b;
	border-bottom:1px solid #a0a0a0;
	overflow:hidden;
}

.bar {
	display:flex;
	flex:none;
	height:24px;
	background:#efefef;
	border:1px solid #3c3c3c;
}

.bar button {
	width:23px;
}

.first {
	border-left:0;
}

.first button:first-child {
	width:21px;
}

.grip {
	border-left:9px solid #666;
	outline:1px solid #3c3c3c;
	outline-offset:-1px;
}

.last {
	flex:1;
}

.sep {
	width:6px;
	margin:2px 0;
	background:linear-gradient(#888, #888) center / 1px 100% no-repeat;
}

.props {
	gap:7px;
}

.combo {
	display:flex;
	align-items:center;
	position:relative;
	padding:0 4px;
	background:#fff;
	border:1px solid #b0b0b0;
	color:#00003c;
}

.combo select {
	flex:1;
	min-width:0;
	height:20px;
	padding:0 0 0 4px;
	border:0;
	background:none;
	appearance:none;
	color:#000;
	font:10px/20px "Liberation Mono", monospace;
}

.combo .arrow {
	pointer-events:none;
}

.color {
	width:149px;
}

.ltype {
	width:159px;
}

.lweight {
	width:124px;
}

.plot {
	width:118px;
}

.views {
	width:140px;
}

.off {
	background:#f3f3f3;
	color:#bbb;
}

.off select {
	color:#777;
	opacity:1;
}

/* drawing area */
.canvas {
	flex:1;
	min-height:0;
	position:relative;
	overflow:hidden;
}

.param text {
	fill:#a4a4a4;
	font:17px "Liberation Serif", serif;
}

.dia text {
	fill:#fff;
	font:26px "Liberation Serif", serif;
	white-space:pre;
}

.dia .phi {
	font:bold 24px "Liberation Sans", sans-serif;
}

.axis text {
	fill:#fff;
	font:300 28px Lato, sans-serif;
	text-anchor:middle;
}

.palette {
	position:absolute;
	left:0;
	top:102px;
	width:8px;
	height:513px;
	padding:4px 0 3px;
	display:flex;
	flex-direction:column;
	gap:8px;
	overflow:hidden;
	background:#cdcdcd;
	border:1px solid #e8e8e8;
	border-left:0;
	border-radius:0 4px 4px 0;
}

.palette button {
	justify-content:flex-start;
}

.palette .name {
	margin-top:auto;
	margin-left:-6px;
	width:12px;
	line-height:12px;
	writing-mode:vertical-rl;
	text-orientation:sideways;
}

/* model and layout tabs */
.layouts {
	display:flex;
	flex:none;
	align-items:center;
	height:16px;
	background:#f3f3f3;
	border-top:1px solid #666;
	line-height:14px;
}

.layouts .nav {
	width:13px;
	height:14px;
	border-right:1px solid #aaa;
}

.layouts .nav:first-child {
	width:7px;
}

.tab {
	height:15px;
	padding:0 4px 2px;
}

.tab.on {
	width:46px;
	margin:0 1px;
	background:#000;
	color:#3ff;
	clip-path:polygon(0 0, 100% 0, 88% 100%, 12% 100%);
}

/* command line */
.command {
	flex:none;
	background:#fff;
	border-top:5px solid #6a6a6a;
	border-left:5px solid #aaa;
	font-size:16px;
	line-height:17px;
}

.command span {
	font:13px/10px "Liberation Mono", monospace;
}

.command p {
	height:17px;
	margin:0;
	line-height:14px;
	white-space:pre;
}

.history {
	height:40px;
	padding-left:2px;
	border-bottom:1px solid #999;
}

.prompt {
	display:flex;
	height:18px;
	padding-left:2px;
}

.prompt input {
	flex:1;
	border:0;
	padding:0 4px;
	outline:0;
	font:13px/17px "Liberation Mono", monospace;
}

/* status bar */
.status {
	display:flex;
	flex:none;
	height:23px;
	background:linear-gradient(#999, #777);
	border-top:1px solid #000;
	color:#000;
}

.coords {
	width:201px;
	padding:4px 0 0 2px;
	font:10px/16px "Liberation Mono", monospace;
}

.group {
	display:flex;
	border-left:1px solid #555;
}

.group button {
	width:22px;
	background:linear-gradient(#c4c4c4, #a0a0a0);
	border-right:1px solid #555;
}

.group .lit {
	background:linear-gradient(#e8f6fa, #9cc4d4);
}

.group .anno {
	width:53px;
	gap:2px;
}

.group .dim svg {
	opacity:.5;
}

.group span {
	font:10px/16px "Liberation Mono", monospace;
}

.group .cn {
	font:12px/16px "Noto Sans CJK SC", sans-serif;
}

.right {
	margin-left:auto;
}

.gap {
	margin-left:17px;
}

.user {
	margin-left:5px;
}

.user button {
	width:68px;
	border-right:0;
}
```
